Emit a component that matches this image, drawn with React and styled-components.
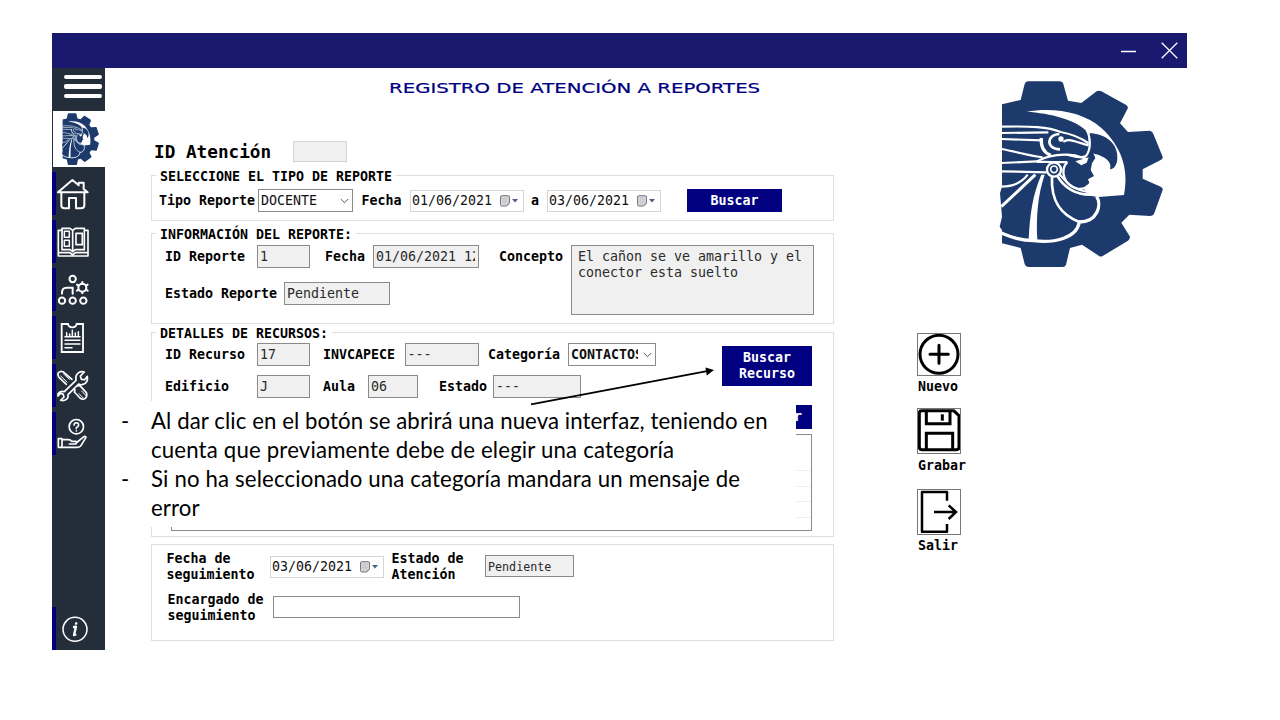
import React from "react";
import styled, { createGlobalStyle } from "styled-components";

const NAVY = "#000080";
const LOGO_BLUE = "#1c3b6c";

const GlobalStyle = createGlobalStyle`
  *, *::before, *::after { box-sizing: border-box; }
  body { margin: 0; background: #fff; overflow: hidden; }
`;

const Slide = styled.div`
  position: relative;
  width: 1280px;
  height: 720px;
  padding: 33px 0 0 52px;
  background: #fff;
  color: #000;
  font-family: "DejaVu Sans Mono", monospace;
  font-size: 13.29px;
  line-height: 16px;
`;

const Window = styled.div`
  width: 1135px;
  height: 617px;
  display: flex;
  flex-direction: column;
`;

const TitleBar = styled.header`
  height: 35px;
  flex: none;
  display: flex;
  justify-content: flex-end;
  align-items: center;
  gap: 24px;
  padding-right: 9px;
  background: #191970;
`;

const Body = styled.div`
  flex: 1;
  display: flex;
`;

const Sidebar = styled.nav`
  width: 53px;
  display: flex;
  flex-direction: column;
  background: #242e3a;
`;

const MenuToggle = styled.div`
  height: 42.5px;
  display: flex;
  flex-direction: column;
  gap: 5px;
  padding: 7px 0 0 12px;
`;

const MenuLine = styled.span`
  width: 38px;
  height: 4.4px;
  border-radius: 2px;
  background: #fff;
`;

const SideLogo = styled.div`
  height: 56.5px;
  margin-left: 1px;
  padding: 2px 0 0 9px;
  background: #fff;
`;

const SideItem = styled.div`
  height: 43px;
  margin-top: ${(p) => (p.$last ? "auto" : "5px")};
  border-left: 4px solid ${NAVY};
  svg { display: block; }
`;

const Main = styled.main`
  display: flex;
  padding-left: 46px;
`;

const FormColumn = styled.section`
  width: 683px;
  display: flex;
  flex-direction: column;
`;

const Heading = styled.h1`
  margin: 0;
  height: 41px;
  padding-left: 238px;
  font: 400 13.2px/42px "DejaVu Sans", sans-serif;
  -webkit-text-stroke: 0.2px ${NAVY};
  color: ${NAVY};
  white-space: nowrap;
  span { display: inline-block; transform-origin: left; transform: scaleX(${(p) => p.$stretch}); }
`;

const IdRow = styled.div`
  display: flex;
  align-items: center;
  height: 22px;
  margin: 31px 0 13px;
  padding-left: 3px;
  font-size: 17.7px;
  line-height: 20px;
  font-weight: 700;
`;

const IdText = styled.span`
  padding-top: 2px;
`;

const IdBox = styled.div`
  width: 54px;
  height: 21px;
  margin-left: 22px;
  background: #f0f0f0;
  border: 1px solid #d4d4d4;
`;

const Group = styled.div`
  height: ${(p) => p.$h}px;
  margin-bottom: ${(p) => p.$gap}px;
  border: 1px solid #dedede;
  display: flex;
  flex-direction: column;
`;

const Legend = styled.div`
  align-self: flex-start;
  height: 16px;
  margin: -8px 0 0 4px;
  padding: 1px 4px 0;
  background: #fff;
  font-weight: 700;
`;

const Row = styled.div`
  display: flex;
  align-items: ${(p) => p.$align || "center"};
  margin-top: ${(p) => p.$mt || 0}px;
  height: ${(p) => p.$h || 23}px;
`;

const Stack = styled.div`
  display: flex;
  flex-direction: column;
  width: ${(p) => p.$w}px;
`;

const Label = styled.label`
  flex: none;
  width: ${(p) => p.$w}px;
  margin-left: ${(p) => p.$ml || 0}px;
  padding-top: 1px;
  font-weight: 700;
  white-space: pre;
`;

const Field = styled.div`
  flex: none;
  width: ${(p) => p.$w}px;
  height: ${(p) => p.$h || 22.5}px;
  margin-left: ${(p) => p.$ml || 0}px;
  margin-bottom: ${(p) => p.$mb || 0}px;
  padding: 3px 3px 0 2px;
  border: 1px solid #8a8a8a;
  background: ${(p) => (p.$editable ? "#fff" : "#f0f0f0")};
  color: #2a2a2a;
  font-size: ${(p) => p.$size || 13.29}px;
  line-height: 16px;
  white-space: nowrap;
`;

const Clip = styled.span`
  display: block;
  overflow: hidden;
`;

const Area = styled(Field)`
  padding: 3px 6px;
  white-space: pre;
`;

const Combo = styled(Field)`
  display: flex;
  justify-content: space-between;
  align-items: center;
  gap: 5px;
  padding: 0 3px 0 2px;
  background: #fff;
  font-weight: ${(p) => (p.$bold ? 700 : 400)};
  color: #111;
`;

const DateBox = styled.div`
  flex: none;
  width: 114.5px;
  height: 22px;
  margin-left: ${(p) => p.$ml || 0}px;
  padding: 1px 5px 0 1.5px;
  display: flex;
  align-items: center;
  justify-content: space-between;
  border: 1px solid #d6d6d6;
  color: #111;
`;

const Button = styled.button`
  flex: none;
  width: ${(p) => p.$w}px;
  height: ${(p) => p.$h}px;
  margin-left: ${(p) => p.$ml || 0}px;
  padding: 0 ${(p) => p.$pr || 0}px 0 0;
  border: 0;
  background: ${NAVY};
  color: #fff;
  font: 700 13.29px/16px "DejaVu Sans Mono", monospace;
  text-align: ${(p) => (p.$pr ? "right" : "center")};
  white-space: pre;
`;

const Table = styled.div`
  width: 641px;
  height: 97px;
  margin: 5px 0 0 19px;
  padding-top: 21px;
  border: 1px solid #8a8a8a;
`;

const TableRow = styled.div`
  height: 15.4px;
  display: grid;
  grid-template-columns: 74px 68px 112px 117px 1fr;
  border-bottom: 1px solid #f0f0f0;
  span { border-right: 1px solid #f0f0f0; }
`;

const SideColumn = styled.aside`
  display: flex;
  flex-direction: column;
  padding: 2px 0 0 83px;
`;

const LogoBox = styled.div`
  height: 210px;
  margin: 0 0 53px 63px;
`;

const Action = styled.div`
  display: flex;
  flex-direction: column;
  height: ${(p) => p.$h}px;
  gap: ${(p) => p.$gap}px;
  font-weight: 700;
`;

const ActionName = styled.span`
  padding-left: 1px;
`;

const ActionIcon = styled.div`
  width: 44px;
  height: ${(p) => p.$h}px;
  border: 1px solid #777;
  svg { display: block; }
`;

const Callout = styled.div`
  position: absolute;
  left: 112px;
  top: 401px;
  width: 684px;
  height: 126px;
  padding: 5px 0 0 9px;
  background: #fff;
  font-family: Lato, sans-serif;
  font-size: 22.2px;
  line-height: 29px;
`;

const CalloutLine = styled.div`
  display: grid;
  grid-template-columns: 30px 1fr;
  height: 29px;
  white-space: nowrap;
  letter-spacing: ${(p) => p.$ls || 0}px;
`;

const Arrow = styled.svg`
  position: absolute;
  left: 525px;
  top: 360px;
`;

function Emblem({ width, height, viewBox }) {
  return (
    <svg width={width} height={height} viewBox={viewBox} preserveAspectRatio="none" style={{ display: "block" }}>
      <path fill={LOGO_BLUE} d="M66 103 L122 90 L134 42 Q136 34 144 34 L238 34 Q248 34 250 42 L264 92 L304 99 L350 64 Q358 60 364 64 L440 106 Q446 112 442 118 L420 160 L444 186 L510 182 Q518 184 520 192 L548 260 Q549 267 542 270 L488 298 V326 L542 350 Q550 354 548 360 L522 432 Q518 438 510 438 L448 434 L424 458 L450 500 Q450 508 444 512 L368 558 Q360 562 354 556 L306 524 L270 534 L258 584 Q256 591 248 591 L144 591 Q136 590 134 582 L122 534 L66 520 V480 L59 470 L66 440 L60 370 L66 350 Z" />
      <path fill="#fff" d="M140 125 C220 112 310 125 365 175 C422 228 448 295 432 375 L356 381 C332 380 316 370 312 356 L328 338 L324 328 L342 318 L332 300 L336 280 L346 264 L340 250 L328 240 L324 188 C290 148 210 130 140 125Z" />
      <path fill={LOGO_BLUE} d="M328 190 C372 190 416 218 412 268 C410 286 402 298 390 298 C398 274 372 256 330 248Z" />
      <g fill="none" stroke="#fff" strokeWidth="6.5">
        <path d="M64 170 C150 168 205 170 242 186 C285 194 308 207 326 220" />
        <path d="M320 180 C334 206 332 240 318 258 C300 268 280 258 262 254" />
        <path d="M64 189 L205 187 M64 207 L186 211 M64 237 C110 245 150 258 188 262" />
        <path d="M184 204 C182 230 192 248 212 256" strokeWidth="10" />
        <path d="M64 279 L170 274 C200 258 240 250 285 256 L318 266" />
        <path d="M170 276 C200 274 235 278 262 276" />
        <path d="M64 304 L200 307" />
        <path d="M238 192 C202 192 194 236 240 238" strokeWidth="8" />
        <path d="M250 216 C262 204 276 212 326 226" />
        <path d="M262 276 C238 302 252 346 292 356 C306 358 318 354 324 346" strokeWidth="7" />
        <path d="M166 314 L64 410" strokeWidth="9" />
        <path d="M216 320 C212 398 246 436 298 456" strokeWidth="8" />
        <path d="M230 314 C248 350 290 382 352 372" strokeWidth="8" />
        <path d="M240 314 C268 350 290 360 324 366" />
        <path d="M350 380 C366 405 352 456 298 456 C290 505 222 520 160 512 C118 512 86 498 58 486" strokeWidth="10" />
        <path d="M143 314 C120 345 90 350 64 350" />
      </g>
      <path fill="#fff" d="M184 314 L194 314 C174 372 168 440 172 510 L146 508 C150 432 158 374 184 314Z" />
      <circle cx="222" cy="299" r="21" fill={LOGO_BLUE} stroke="#fff" strokeWidth="7" />
      <circle cx="222" cy="298" r="10" fill="none" stroke="#fff" strokeWidth="5" />
      <circle cx="243" cy="207" r="8" fill="#fff" />
      <path fill="#fff" d="M286 274 L326 262 L320 278 L304 286Z" />
    </svg>
  );
}

function SideIcon({ y, children }) {
  return (
    <svg width="34" height="43" viewBox={`18 ${y} 102 129`} fill="none" stroke="#fff" strokeWidth="6" strokeLinejoin="round" strokeLinecap="round">
      {children}
    </svg>
  );
}

function Chevron() {
  return (
    <svg width="9" height="6" viewBox="0 0 9 6" fill="none" stroke="#555" strokeWidth="1" style={{ flex: "none" }}>
      <path d="M0.8 1 L4.5 4.7 L8.2 1" />
    </svg>
  );
}

function DatePicker({ value, ml }) {
  return (
    <DateBox $ml={ml}>
      <span>{value}</span>
      <svg width="18" height="12" viewBox="0 0 18 12">
        <path d="M.5 2 Q.5 .7 2 .7 H8.2 Q9.5 .7 9.5 2 V8 L6.8 11 H2 Q.5 11 .5 9.7Z" fill="#d5d5da" stroke="#77777d" />
        <path d="M2 4H8M2 6.5H8M4 2V9.5M6 2V9" stroke="#c2c2c8" strokeWidth=".6" />
        <path d="M9.5 8.6 L7.4 11 V8.6Z" fill="#999" />
        <path d="M12 4 H18 L15 7.4Z" fill="#4b5f85" />
      </svg>
    </DateBox>
  );
}

export default function App() {
  return (
    <Slide>
      <GlobalStyle />
      <Window>
        <TitleBar>
          <svg width="17" height="18" viewBox="0 0 17 18"><path d="M1 9.5 H16" stroke="#fff" strokeWidth="1.5" /></svg>
          <svg width="17" height="17" viewBox="0 0 17 17"><path d="M.7 .7 L16.3 16.3 M16.3 .7 L.7 16.3" stroke="#fff" strokeWidth="1.3" /></svg>
        </TitleBar>
        <Body>
          <Sidebar>
            <MenuToggle><MenuLine /><MenuLine /><MenuLine /></MenuToggle>
            <SideLogo><Emblem width={37} height={52} viewBox="58 32 492 560" /></SideLogo>
            <SideItem>
              <SideIcon y={21}>
                <path d="M24 82 L67 45 L86 61 V53 H101 V72 L113 82 H24" />
                <path d="M34 84 V121 Q34 130 43 130 H57 V99 H78 V130 H93 Q103 130 103 121 V84" />
              </SideIcon>
            </SideItem>
            <SideItem>
              <SideIcon y={165}>
                <path d="M36 196 H25 V273 H114 V196 H104" strokeWidth="5" />
                <path d="M36 254 V190 H60 L68 196 L76 190 H103 V254 H76 L68 260 L60 254Z M68 196 V260" strokeWidth="5" />
                <path d="M27 263 H60 L68 270 L76 263 H112" strokeWidth="5" />
                <rect x="43" y="199" width="15" height="18" strokeWidth="4.5" />
                <rect x="43" y="226" width="15" height="18" strokeWidth="4.5" />
                <rect x="78" y="205" width="19" height="34" strokeWidth="5" />
              </SideIcon>
            </SideItem>
            <SideItem>
              <SideIcon y={309}>
                <circle cx="68" cy="342" r="9.5" />
                <circle cx="36" cy="407" r="9.5" />
                <circle cx="68" cy="407" r="9.5" />
                <circle cx="100" cy="407" r="9.5" />
                <path d="M36 386 Q35 368 50 368 H68 V386" />
                <circle cx="97" cy="368" r="12" />
                <path d="M97 356 V351 M97 380 V385 M86 362 L81 359 M108 362 L113 359 M86 374 L81 377 M108 374 L113 377" strokeWidth="6" />
              </SideIcon>
            </SideItem>
            <SideItem>
              <SideIcon y={3}>
                <path d="M35 27 H54 Q56 37 67 37 Q78 37 80 27 H99 V111 H35Z" strokeLinejoin="miter" strokeWidth="5.5" />
                <path d="M45 65 H90 M45 76 H90 M45 87 H90 M45 98 H66" strokeWidth="4.5" />
                <path d="M50 63 V53 M59 63 V57 M67 63 V46 M76 63 V54 M85 63 V50" strokeWidth="4.5" />
              </SideIcon>
            </SideItem>
            <SideItem>
              <SideIcon y={147}>
                <path d="M49 208 L27 187 Q19 174 30 170 Q39 167 47 177 L66 193 M78 207 L84 213 L89 211 L109 233 Q113 243 106 250 Q98 256 90 249 L73 231 L75 225 L69 219" strokeWidth="5" />
                <path d="M32 183 L51 201 M40 176 L58 193" strokeWidth="3" />
                <path d="M87 236 L100 249 M95 228 L108 242" strokeWidth="3" />
                <path d="M24 236 Q31 226 43 230 L78 196 Q75 181 86 173 Q94 168 103 171 L91 183 L94 193 L104 194 L112 184 Q115 204 99 208 Q92 211 86 207 L54 239 Q56 252 44 256 Q38 258 32 256 L42 246 L39 237 L31 235 L24 243Z" fill="#242e3a" strokeWidth="5" />
              </SideIcon>
            </SideItem>
            <SideItem>
              <SideIcon y={291}>
                <circle cx="79" cy="335" r="21.5" strokeWidth="5" />
                <path d="M72 331 Q72 323 79 323 Q86 323 86 330 Q85 335 79 338 V341 M79 347 V348" strokeWidth="4.5" />
                <path d="M25 371 H36 V397 H25Z M36 374 H54 Q62 374 65 379 H78 Q82 386 75 387 H58 M82 381 L99 367 Q106 361 108 367 L93 392 Q90 397 82 397 H36" strokeWidth="5" />
              </SideIcon>
            </SideItem>
            <SideItem $last>
              <SideIcon y={351}>
                <circle cx="75" cy="418" r="36" strokeWidth="4.5" />
                <path d="M78 401 L79 400 M72 411 L78 410 L72 435 L76 434" strokeWidth="7" />
              </SideIcon>
            </SideItem>
          </Sidebar>

          <Main>
            <FormColumn>
              <Heading $stretch={1.495}><span>REGISTRO DE ATENCIÓN A REPORTES</span></Heading>
              <IdRow><IdText>ID Atención</IdText><IdBox /></IdRow>

              <Group $h={46} $gap={12}>
                <Legend>SELECCIONE EL TIPO DE REPORTE</Legend>
                <Row $mt={5}>
                  <Label $ml={7} $w={99}>Tipo Reporte</Label>
                  <Combo $w={95}>DOCENTE<Chevron /></Combo>
                  <Label $ml={8.5} $w={48}>Fecha</Label>
                  <DatePicker value="01/06/2021" />
                  <Label $ml={7} $w={15.5}>a</Label>
                  <DatePicker value="03/06/2021" />
                  <Button $ml={26} $w={95} $h={23}>Buscar</Button>
                </Row>
              </Group>

              <Group $h={91} $gap={8}>
                <Legend>INFORMACIÓN DEL REPORTE:</Legend>
                <Row $mt={3} $h={70} $align="flex-start">
                  <Stack $w={347}>
                    <Row>
                      <Label $ml={13} $w={92}>ID Reporte</Label>
                      <Field $w={52.5}>1</Field>
                      <Label $ml={15.5} $w={48}>Fecha</Label>
                      <Field $w={106}><Clip>01/06/2021 12</Clip></Field>
                    </Row>
                    <Row $mt={14}>
                      <Label $ml={13} $w={119}>Estado Reporte</Label>
                      <Field $w={106}>Pendiente</Field>
                    </Row>
                  </Stack>
                  <Row><Label $w={72}>Concepto</Label></Row>
                  <Area $w={243} $h={70}>{"El cañon se ve amarillo y el\nconector esta suelto"}</Area>
                </Row>
              </Group>

              <Group $h={205} $gap={7}>
                <Legend>DETALLES DE RECURSOS:</Legend>
                <Row $mt={2} $h={56} $align="flex-start">
                  <Stack $w={570}>
                    <Row>
                      <Label $ml={13} $w={92}>ID Recurso</Label>
                      <Field $w={52.5}>17</Field>
                      <Label $ml={13.5} $w={81.5}>INVCAPECE</Label>
                      <Field $w={74}>---</Field>
                      <Label $ml={9.5} $w={80}>Categoría</Label>
                      <Combo $w={88} $bold><Clip>CONTACTOS</Clip><Chevron /></Combo>
                    </Row>
                    <Row $mt={9}>
                      <Label $ml={13} $w={92}>Edificio</Label>
                      <Field $w={52.5}>J</Field>
                      <Label $ml={13.5} $w={45}>Aula</Label>
                      <Field $w={49.5}>06</Field>
                      <Label $ml={21.5} $w={54}>Estado</Label>
                      <Field $w={88}>---</Field>
                    </Row>
                  </Stack>
                  <Row $mt={3} $h={40}><Button $w={90} $h={40}>{"Buscar\nRecurso"}</Button></Row>
                </Row>
                <Row $mt={6} $h={24}><Button $ml={570} $w={90} $h={24} $pr={10}>r</Button></Row>
                <Table>
                  {[0, 1, 2, 3].map((r) => (
                    <TableRow key={r}><span /><span /><span /><span /></TableRow>
                  ))}
                </Table>
              </Group>

              <Group $h={97} $gap={0}>
                <Row $mt={5} $h={33}>
                  <Label $ml={14.5} $w={103}>{"Fecha de\nseguimiento"}</Label>
                  <DatePicker value="03/06/2021" />
                  <Label $ml={7.5} $w={93.5}>{"Estado de\nAtención"}</Label>
                  <Field $w={88.5} $h={22} $mb={2} $size={11.7}>Pendiente</Field>
                </Row>
                <Row $mt={8} $h={33}>
                  <Label $ml={15.5} $w={105}>{"Encargado de\nseguimiento"}</Label>
                  <Field $w={247.5} $editable $mb={1} />
                </Row>
              </Group>
            </FormColumn>

            <SideColumn>
              <LogoBox><Emblem width={200} height={210} viewBox="0 0 600 630" /></LogoBox>
              <Action $h={75} $gap={3}>
                <ActionIcon $h={43}>
                  <svg width="42" height="41" viewBox="55 28 126 123" fill="none" stroke="#000" strokeWidth="9" strokeLinecap="round">
                    <circle cx="118" cy="89" r="57" />
                    <path d="M91 89 H146 M118 62 V116" />
                  </svg>
                </ActionIcon>
                <ActionName>Nuevo</ActionName>
              </Action>
              <Action $h={81} $gap={4}>
                <ActionIcon $h={46}>
                  <svg width="42" height="44" viewBox="55 253 126 132" fill="none" stroke="#000" strokeWidth="9" strokeLinejoin="round">
                    <path d="M66 258 H162 L178 273 V368 Q178 375 170 375 H66 Q59 375 59 368 V265 Q59 258 66 258Z" />
                    <path d="M80 258 V297 H151 V258 M80 375 V326 H159 V375" strokeLinejoin="miter" />
                    <path d="M128 269 V288" />
                  </svg>
                </ActionIcon>
                <ActionName>Grabar</ActionName>
              </Action>
              <Action $h={80} $gap={3}>
                <ActionIcon $h={46}>
                  <svg width="42" height="44" viewBox="55 495 126 132" fill="none" stroke="#000" strokeWidth="7.5">
                    <path d="M142 527 V501 H67 V620 H142 V597" strokeLinejoin="round" />
                    <path d="M103 561 H168 M147 541 L169 561 L147 582" />
                  </svg>
                </ActionIcon>
                <ActionName>Salir</ActionName>
              </Action>
            </SideColumn>
          </Main>
        </Body>
      </Window>

      <Callout>
        <CalloutLine $ls={0.09}><span>-</span><span>Al dar clic en el botón se abrirá una nueva interfaz, teniendo en</span></CalloutLine>
        <CalloutLine $ls={0.18}><span /><span>cuenta que previamente debe de elegir una categoría</span></CalloutLine>
        <CalloutLine $ls={0.15}><span>-</span><span>Si no ha seleccionado una categoría mandara un mensaje de</span></CalloutLine>
        <CalloutLine $ls={0.15}><span /><span>error</span></CalloutLine>
      </Callout>

      <Arrow width="195" height="50" viewBox="525 360 195 50">
        <path d="M531 404.3 L707 371.2" stroke="#000" strokeWidth="1.8" />
        <path d="M714 370 L705.4 367.6 L706.8 375.5Z" />
      </Arrow>
    </Slide>
  );
}
